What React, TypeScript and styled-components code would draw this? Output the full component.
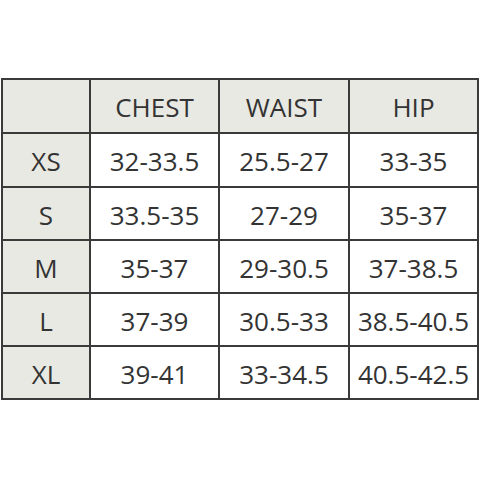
import React from "react";
import styled, { createGlobalStyle } from "styled-components";

const Global = createGlobalStyle`
  html, body { margin: 0; padding: 0; background: #ffffff; }
  body { font-family: "Open Sans", "Liberation Sans", sans-serif; }
`;

const Page = styled.div`
  width: 480px;
  height: 480px;
  padding: 78px 1px 0 1px;
  box-sizing: border-box;
`;

const Chart = styled.div`
  display: grid;
  grid-template-columns: 86px 127px 128px 127px;
  grid-template-rows: 52px 52px 51px 51px 51px 51px;
  gap: 2px;
  padding: 2px;
  background: #3a3a3a;
  width: 478px;
  box-sizing: border-box;
`;

const Cell = styled.div<{ $shade?: boolean }>`
  display: flex;
  align-items: center;
  justify-content: center;
  padding-top: 2px;
  box-sizing: border-box;
  background: ${(p) => (p.$shade ? "#e9e9e3" : "#ffffff")};
  color: #333333;
  font-size: 26px;
  font-weight: 400;
  line-height: 1;
`;

const headers = ["CHEST", "WAIST", "HIP"];
const rows: [string, string, string, string][] = [
  ["XS", "32-33.5", "25.5-27", "33-35"],
  ["S", "33.5-35", "27-29", "35-37"],
  ["M", "35-37", "29-30.5", "37-38.5"],
  ["L", "37-39", "30.5-33", "38.5-40.5"],
  ["XL", "39-41", "33-34.5", "40.5-42.5"],
];

export default function App() {
  return (
    <>
      <Global />
      <Page>
        <Chart>
          <Cell $shade />
          {headers.map((h) => (
            <Cell key={h} $shade>
              {h}
            </Cell>
          ))}
          {rows.map((r) => (
            <React.Fragment key={r[0]}>
              <Cell $shade>{r[0]}</Cell>
              <Cell>{r[1]}</Cell>
              <Cell>{r[2]}</Cell>
              <Cell>{r[3]}</Cell>
            </React.Fragment>
          ))}
        </Chart>
      </Page>
    </>
  );
}
